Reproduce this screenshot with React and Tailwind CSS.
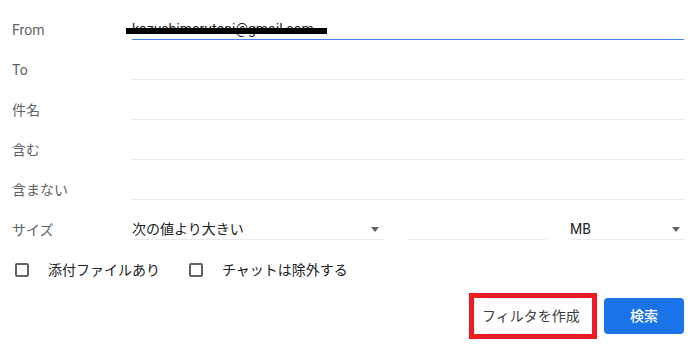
import React from "react";

const FieldRow = ({ label, children, active }) => {
	return (
		<div className="flex h-10 items-end">
			<div className="w-[120px] h-5 leading-5 text-[14px] text-[#5f6368]">{label}</div>
			<div
				className={
					"flex-1 h-5 leading-[19px] text-[14px] text-[#202124] border-b " +
					(active ? "border-[#4285f4]" : "border-[#e8eaed]")
				}
			>
				{children}
			</div>
		</div>
	);
};

const Caret = () => (
	<svg width="8" height="5" viewBox="0 0 8 5" className="shrink-0">
		<path d="M0 0h8L4 5z" fill="#5f6368" />
	</svg>
);

const Check = ({ label }) => (
	<div className="flex items-center">
		<div className="w-[14px] h-[14px] border-2 border-[#5f6368] rounded-[2px]" />
		<span className="ml-[19px] text-[14px] leading-5 text-[#202124]">{label}</span>
	</div>
);

export default function App() {
	return (
		<div
			className="w-[697px] h-[346px] bg-white pl-3 pr-[13px]"
			style={{ fontFamily: "Roboto, 'Noto Sans CJK JP', sans-serif" }}
		>
			<FieldRow label="From" active>
				<div className="relative">
					<span>kazushimarutani@gmail.com</span>
					{/* redaction mark */}
					<div className="absolute left-[-6px] top-[8px] w-[201px] h-[6px] bg-black" />
				</div>
			</FieldRow>
			<FieldRow label="To" />
			<FieldRow label="件名" />
			<FieldRow label="含む" />
			<FieldRow label="含まない" />

			<div className="flex h-10 items-end">
				<div className="w-[120px] h-5 leading-5 text-[14px] text-[#5f6368]">サイズ</div>
				<div className="w-[252px] h-5 flex items-center justify-between pr-[5px] border-b border-[#e8eaed] text-[14px] leading-[19px] text-[#202124]">
					<span>次の値より大きい</span>
					<Caret />
				</div>
				<div className="ml-6 w-[138px] h-5 border-b border-[#e8eaed]" />
				<div className="ml-6 flex-1 h-5 flex items-center justify-between pr-[4px] border-b border-[#e8eaed] text-[14px] leading-[19px] text-[#202124]">
					<span>MB</span>
					<Caret />
				</div>
			</div>

			<div className="mt-5 flex items-center h-5 pl-[3px]">
				<Check label="添付ファイルあり" />
				<div className="ml-[29px]">
					<Check label="チャットは除外する" />
				</div>
			</div>

			<div className="mt-[13px] flex justify-end items-center">
				<div className="border-[5px] border-[#ed1c24]">
					<button className="h-9 w-[118px] pl-2 pr-3 text-[14px] text-[#3c4043] text-left">
						フィルタを作成
					</button>
				</div>
				<button className="ml-[7px] w-20 h-9 rounded bg-[#1a73e8] text-white text-[14px] font-medium">
					検索
				</button>
			</div>
		</div>
	);
}
